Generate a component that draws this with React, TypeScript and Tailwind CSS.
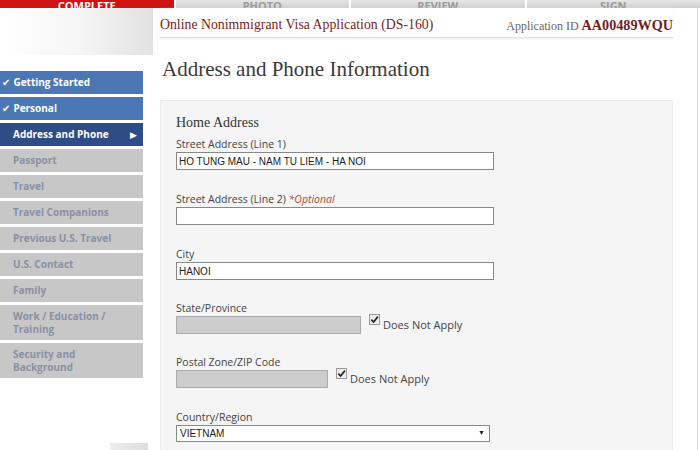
import React from 'react'

const TABS = ['COMPLETE', 'PHOTO', 'REVIEW', 'SIGN']

const NAV = [
  { label: 'Getting Started', state: 'done' },
  { label: 'Personal', state: 'done' },
  { label: 'Address and Phone', state: 'on' },
  { label: 'Passport', state: 'off' },
  { label: 'Travel', state: 'off' },
  { label: 'Travel Companions', state: 'off' },
  { label: 'Previous U.S. Travel', state: 'off' },
  { label: 'U.S. Contact', state: 'off' },
  { label: 'Family', state: 'off' },
  { label: 'Work / Education / Training', state: 'off' },
  { label: 'Security and Background', state: 'off' },
]

const sans = "font-['Open_Sans','DejaVu_Sans',sans-serif]"
const serif = "font-['Liberation_Serif','Times_New_Roman',serif]"
const arial = "font-['Liberation_Sans',Arial,sans-serif]"

function Label({ children }: { children: React.ReactNode }) {
  return <p className={`${sans} text-[10.5px] leading-[13px] text-[#444]`}>{children}</p>
}

function Check() {
  return (
    <span className="w-[11px] h-[11px] shrink-0 border border-[#999] bg-[#eee] flex items-center justify-center">
      <svg width="9" height="9" viewBox="0 0 10 10">
        <path d="M1.5 5.2 L4 7.8 L8.8 1.8" stroke="#222" strokeWidth="1.8" fill="none" />
      </svg>
    </span>
  )
}

function NotApply() {
  return (
    <div className="ml-[8px] -mt-[2px] flex items-start gap-[3px]">
      <Check />
      <span className={`${sans} text-[11px] leading-[13px] text-[#444] mt-[4px]`}>Does Not Apply</span>
    </div>
  )
}

export default function App() {
  return (
    <div className="w-[700px] h-[450px] overflow-hidden bg-white relative">
      {/* step tabs */}
      <div className="flex h-[8px] gap-[2px] bg-white">
        {TABS.map((t, i) => (
          <div key={t}
            className={`flex-1 flex items-end justify-center overflow-hidden ${sans} text-[11px] font-bold leading-none
              ${i === 0 ? 'bg-[#d21313] text-white' : 'bg-gradient-to-b from-[#e6e6e6] to-[#cfcfcf] text-[#9a9a9a]'}`}>
            <span className="-mb-[3px]">{t}</span>
          </div>
        ))}
      </div>

      <div className="flex">
        {/* sidebar */}
        <aside className="w-[160px] shrink-0">
          <div className="h-[47px] w-[153px] bg-gradient-to-r from-white via-[#f6f6f6] to-[#e2e2e2]" />
          <div className="h-[16px]" />
          <div className="flex flex-col gap-[3px] w-[143px]">
            {NAV.map(n => {
              const tall = n.label.length > 22
              return (
                <div key={n.label}
                  className={`flex items-center ${tall ? 'h-[35px]' : 'h-[23px]'} ${sans} text-[10px] font-bold leading-[13px]
                    ${n.state === 'done' ? 'bg-[#4b77b4] text-white pl-[2px]' : ''}
                    ${n.state === 'on' ? 'bg-[#2e4c86] text-white pl-[13px] pr-[6px] justify-between' : ''}
                    ${n.state === 'off' ? 'bg-[#c7c7c7] text-[#8990a4] pl-[13px] pr-[20px]' : ''}`}>
                  {n.state === 'done' && <span className="mr-[3px] text-[10px]">✔</span>}
                  <span>{n.label}</span>
                  {n.state === 'on' && <span className="text-[9px]">▶</span>}
                </div>
              )
            })}
          </div>
          <div className="mt-[65px] ml-[110px] w-[38px] h-[8px] bg-gradient-to-r from-[#eee] to-[#ddd]" />
        </aside>

        {/* main */}
        <main className="flex-1 pr-[27px]">
          <header className="flex items-end justify-between h-[30px] pb-[1px] border-b border-[#e3e3e3] shadow-[0_1px_2px_#eee]">
            <p className={`${serif} text-[13.8px] text-[#7a2323]`}>Online Nonimmigrant Visa Application (DS-160)</p>
            <p className={`${serif} text-[12px] text-[#666]`}>
              Application ID <span className="text-[14.2px] font-bold text-[#6f1d24]">AA00489WQU</span>
            </p>
          </header>

          <h1 className={`${serif} text-[21px] text-[#3a3a3a] mt-[18px] ml-[2px] leading-[26px]`}>
            Address and Phone Information
          </h1>

          <section className="mt-[18px] bg-[#f5f5f5] border border-[#ececec] pl-[15px] pt-[13px] h-[400px]">
            <h2 className={`${serif} text-[14px] text-[#333] leading-[18px]`}>Home Address</h2>

            <div className="mt-[6px]">
              <Label>Street Address (Line 1)</Label>
              <div className={`mt-[1px] w-[318px] h-[18px] bg-white border border-[#888] flex items-center pl-[2px] ${arial} text-[10px] text-[#222]`}>
                HO TUNG MAU - NAM TU LIEM - HA NOI
              </div>
            </div>

            <div className="mt-[23px]">
              <Label>Street Address (Line 2) <i className="text-[#b24a3a]">*Optional</i></Label>
              <div className="mt-[1px] w-[318px] h-[18px] bg-white border border-[#888]" />
            </div>

            <div className="mt-[23px]">
              <Label>City</Label>
              <div className={`mt-[1px] w-[318px] h-[18px] bg-white border border-[#888] flex items-center pl-[2px] ${arial} text-[10px] text-[#222]`}>
                HANOI
              </div>
            </div>

            <div className="mt-[22px]">
              <Label>State/Province</Label>
              <div className="mt-[1px] flex items-start h-[18px]">
                <div className="w-[185px] h-[18px] bg-[#cdcdcd] border border-[#aaa]" />
                <NotApply />
              </div>
            </div>

            <div className="mt-[22px]">
              <Label>Postal Zone/ZIP Code</Label>
              <div className="mt-[1px] flex items-start h-[18px]">
                <div className="w-[152px] h-[18px] bg-[#cdcdcd] border border-[#aaa]" />
                <NotApply />
              </div>
            </div>

            <div className="mt-[23px]">
              <Label>Country/Region</Label>
              <div className={`mt-[1px] w-[314px] h-[17px] bg-white border border-[#888] flex items-center justify-between pl-[3px] pr-[4px] ${arial} text-[10px] text-[#222]`}>
                <span>VIETNAM</span>
                <span className="text-[7px]">▼</span>
              </div>
            </div>
          </section>
        </main>
      </div>
      <div className="absolute right-[2px] top-[8px] bottom-0 w-px bg-[#ddd]" />
    </div>
  )
}
